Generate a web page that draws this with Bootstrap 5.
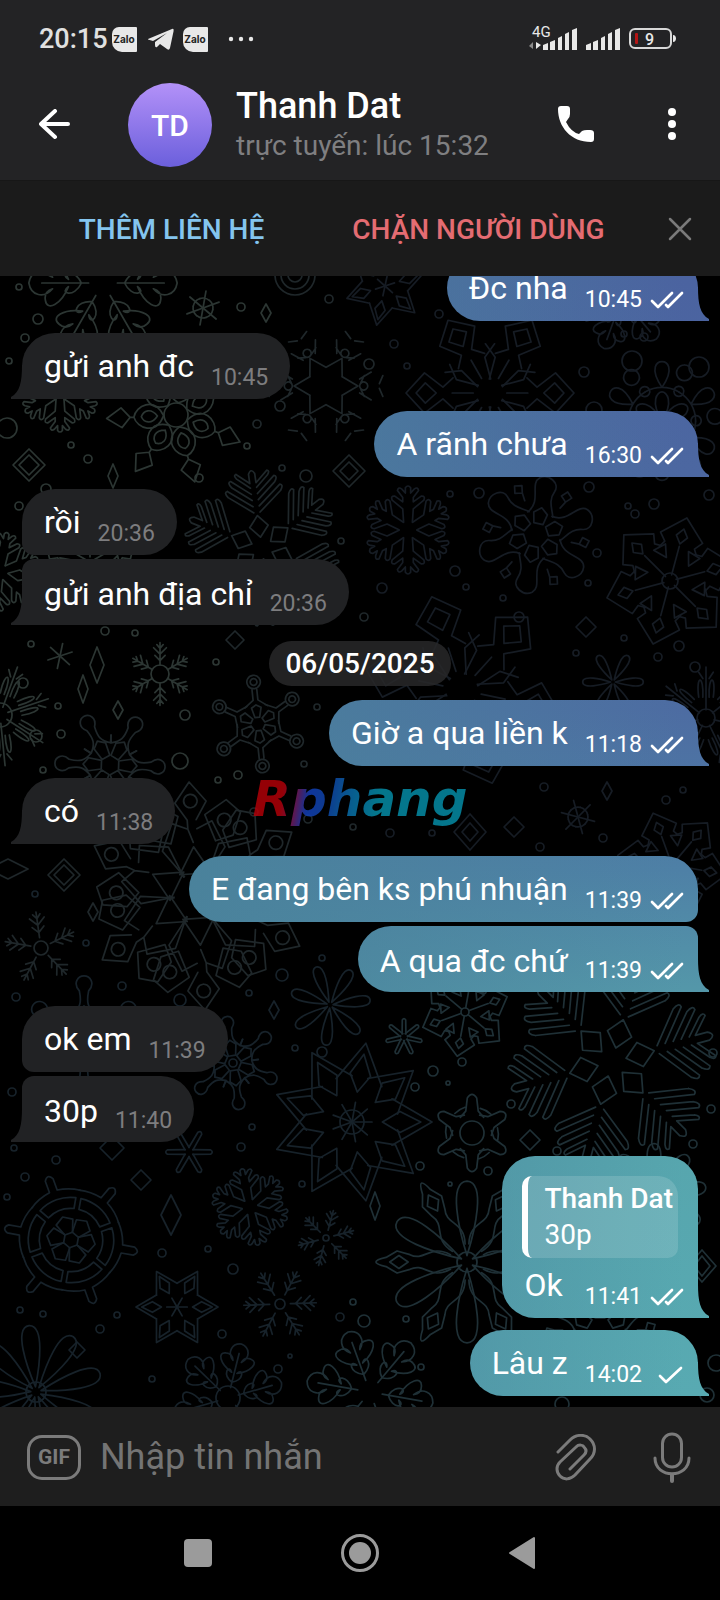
<!DOCTYPE html>
<html lang="vi">
<head>
<meta charset="utf-8">
<meta name="viewport" content="width=device-width, initial-scale=1">
<title>Thanh Dat</title>
<link href="https://cdn.jsdelivr.net/npm/bootstrap@5.3.0/dist/css/bootstrap.min.css" rel="stylesheet">
<style>
  body { background: #000; color: #fff; font-family: Roboto, "Noto Sans", sans-serif; }
  svg { display: block; }
  .screen { height: 100vh; }
  .plain-btn { background: none; border: 0; padding: 0; color: inherit; font-weight: inherit; }
  .medium { font-weight: 500; }

  .top-area { background: #232325; }
  .status-row { height: 80px; padding: 0 44px 2px 39px; color: #e8e8e8; font-size: 27px; }
  .clock { font-weight: 500; color: #e0e0e0; padding-top: 1px; }
  .zalo { width: 25px; height: 25px; background: #e8e8e8; border-radius: 7px 1px 1px 10px; color: #222; font: 700 10px/24px Inter, sans-serif; }
  .title-row { height: 100px; padding: 0 44px 10px 39px; }
  .avatar { width: 84px; height: 84px; margin-left: 56px; background: linear-gradient(#b391f8, #6b5fdc); font-size: 30px; font-weight: 500; }
  .chat-name { font-size: 36px; line-height: 38px; font-weight: 500; padding-top: 4px; }
  .chat-seen { font-size: 28px; line-height: 42px; color: #7f7f81; }
  .more-btn { margin-left: 73px; }

  .action-row { height: 96px; background: #1b1b1b; padding-left: 18px; font-size: 28px; font-weight: 500; border-top: 1px solid #171717; }
  .action-row .col { padding-top: 3px; }
  .add-link { color: #84c5ef; }
  .block-link { color: #e46c72; }
  .close-box { width: 88px; padding-left: 36px; color: #7a7a7a; }

  .chat { min-height: 0; background: #000; padding: 0 22px 11px; }
  .wall { position: absolute; inset: 0; width: 100%; height: 100%; fill: none; stroke-width: 1.7; stroke-linejoin: round; stroke-linecap: round; }
  .tint-a { stroke: #2c3633; } .tint-b { stroke: #1f272a; } .tint-c { stroke: #161c24; }
  .tint-d { stroke: #17222a; } .tint-e { stroke: #1f3036; }

  .bubble { position: relative; min-height: 66px; border-radius: 33px; font-size: 32px; line-height: 40px; padding: 13px 22px 7px; margin-top: 12px; gap: 17px; flex-shrink: 0; }
  .stamp { font-size: 23px; line-height: 28px; gap: 8px; height: 28px; margin-top: 18px; }
  .incoming { align-self: flex-start; background: #212224; }
  .incoming .stamp { color: #7d7d7f; }
  .outgoing, .outgoing.tailed::after {
    background:
      linear-gradient(90deg, rgba(74,130,155,1) 25%, rgba(74,130,155,0) 95%) fixed,
      linear-gradient(#4b63a0 276px, #4d6ca2 710px, #4e80a6 870px, #5497a9 990px, #57a6ae 1160px, #58aab2 1400px) fixed;
  }
  .outgoing { align-self: flex-end; padding-right: 14px; }
  .tailed::after { content: ""; position: absolute; bottom: 0; width: 33px; height: 34px; }
  .outgoing.tailed { border-bottom-right-radius: 0; }
  .outgoing.tailed::after { right: -11px; clip-path: path("M20 0H22C22 17 24 27 33 32V34H20Z"); }
  .incoming.tailed { border-bottom-left-radius: 0; }
  .incoming.tailed::after { left: -11px; background: #212224; clip-path: path("M13 0H11C11 17 9 27 0 32V34H13Z"); }
  .group-start.incoming { border-bottom-left-radius: 12px; }
  .group-end.incoming { border-top-left-radius: 12px; }
  .group-start.outgoing { border-bottom-right-radius: 12px; }
  .group-end.outgoing { border-top-right-radius: 12px; }
  .group-end { margin-top: 4px; padding-top: 15px; }
  .group-end .stamp { margin-top: 16px; }
  .turn { margin-top: 14px; }
  .day-pill { position: relative; height: 45px; margin: 16px 0 2px; padding: 0 16px; border-radius: 23px; background: rgba(40,40,41,.85); font-size: 28px; line-height: 45px; font-weight: 500; }

  .with-quote { padding: 20px 14px 7px 20px; }
  .quote { height: 82px; margin-right: 6px; padding: 5px 5px 0 16px; border-left: 6px solid #fff; border-radius: 10px 20px 10px 10px; background: rgba(255,255,255,.14); background-clip: padding-box; font-size: 28px; line-height: 36px; }
  .quote-body { padding: 7px 0 0 2px; }

  .stamp-mark { position: absolute; padding-bottom: 2px; font: italic 700 50px/60px "DejaVu Sans", sans-serif; opacity: .85;
    background: linear-gradient(100deg, #b00008 15%, #8a1040 20%, #123fb8 27%, #1046a8 36%, #0a6aa8 45%, #058ba5 58%); -webkit-background-clip: text; background-clip: text; color: transparent; pointer-events: none; }

  .compose { height: 99px; background: #1e1e1e; padding: 2px 29px 0 27px; color: #7b7b7b; }
  .gif-btn { width: 54px; height: 45px; border: 3px solid #7b7b7b; border-radius: 15px; font: 700 21px/39px Roboto, sans-serif; }
  .compose input { background: none; border: 0; outline: 0; min-width: 0; color: #ddd; font-size: 36px; padding: 0 0 2px; margin-left: 19px; }
  .compose input::placeholder { color: #747474; opacity: 1; }
  .mic-btn { margin-left: 56px; }
  .sys-nav { height: 94px; color: #9b9b9b; gap: 122px; }
</style>
</head>
<body>
<div class="screen d-flex flex-column position-relative overflow-hidden">

  <header class="top-area flex-shrink-0">
    <div class="status-row d-flex align-items-center">
      <span class="clock">20:15</span>
      <span class="zalo text-center ms-1">Zalo</span>
      <svg class="ms-2" width="30" height="26" viewBox="0 0 30 26" fill="#e8e8e8"><path d="M3 13 27 3Q29 2 28.600 5L25 22Q24 25 22 23L15 18 12 21Q10 22 10 19V16L22 7 8 15 3 13.500Z"/></svg>
      <span class="zalo text-center ms-2">Zalo</span>
      <svg class="ms-3" width="32" height="8" viewBox="0 0 32 8" fill="#e8e8e8"><circle cx="7" cy="4" r="2.200"/><circle cx="17" cy="4" r="2.200"/><circle cx="27" cy="4" r="2.200"/></svg>
      <svg class="ms-auto" width="148" height="30" viewBox="528 24 148 30" fill="#e8e8e8" role="img" aria-label="4G, pin 9%">
        <text x="532" y="37" font-size="15">4G</text>
        <path d="M536 42 L541 45 536 49Z"/><path fill="#8a8a8a" d="M533 42V49L529 46Z"/>
        <path d="M543 45 548 43V50H543ZM550 42 555 40V50H550ZM558 38 562 36V50H558ZM565 34 569 32V50H565ZM572 30 577 28V50H572Z"/>
        <path d="M586 45 591 43V50H586ZM593 42 598 40V50H593ZM601 38 605 36V50H601ZM608 34 612 32V50H608ZM615 30 620 28V50H615Z"/>
        <rect x="630" y="29" width="41" height="19" rx="5" fill="none" stroke="#d8d8d8" stroke-width="2"/>
        <path d="M673 35C677 35 677 42 673 42Z"/><rect x="635" y="33" width="3" height="11" rx="1" fill="#b41515"/>
        <text x="645" y="45" font-size="16" font-weight="500">9</text>
      </svg>
    </div>
    <div class="title-row d-flex align-items-center">
      <button class="plain-btn" type="button" aria-label="Quay lại"><svg width="33" height="32" viewBox="1 0 33 32" fill="none" stroke="#fff" stroke-width="4" stroke-linecap="round" stroke-linejoin="round"><path d="M30 15H3M17 2 3 15 17 28"/></svg></button>
      <div class="avatar rounded-circle d-flex align-items-center justify-content-center">TD</div>
      <div class="ms-4 flex-grow-1 text-nowrap">
        <div class="chat-name">Thanh Dat</div>
        <div class="chat-seen">trực tuyến: lúc 15:32</div>
      </div>
      <button class="plain-btn" type="button" aria-label="Gọi"><svg width="38" height="38" viewBox="0 1 38 38" fill="#fff"><path d="M4 1H10Q13 1 13 4V9Q13 12 11 14L9 17Q14 27 22 29L25 26Q27 25 30 25H33Q37 25 37 28V34Q37 37 34 37C14 37 1 22 1 4Q1 1 4 1Z"/></svg></button>
      <button class="plain-btn more-btn" type="button" aria-label="Thêm"><svg width="8" height="34" viewBox="0 0 8 34" fill="#fff"><circle cx="4" cy="4" r="4"/><circle cx="4" cy="16" r="4"/><circle cx="4" cy="28" r="4"/></svg></button>
    </div>
  </header>

  <div class="action-row d-flex align-items-stretch flex-shrink-0">
    <button class="plain-btn add-link col" type="button">THÊM LIÊN HỆ</button>
    <button class="plain-btn block-link col" type="button">CHẶN NGƯỜI DÙNG</button>
    <button class="plain-btn close-box" type="button" aria-label="Đóng"><svg width="24" height="24" viewBox="0 0 24 24" fill="none" stroke="currentColor" stroke-width="2.500" stroke-linecap="round"><path d="M2 2 22 22M22 2 2 22"/></svg></button>
  </div>

  <main class="chat position-relative overflow-hidden flex-grow-1 d-flex flex-column justify-content-end align-items-center">
    <svg class="wall" id="wall" viewBox="0 276 720 1131" preserveAspectRatio="xMidYMid slice" aria-hidden="true"></svg>

    <div class="bubble outgoing tailed d-flex"><span>Đc nha</span><span class="stamp d-flex align-items-center">10:45 <svg width="34" height="18" viewBox="0 0 34 18"><use href="#tick2"/></svg></span></div>
    <div class="bubble incoming tailed d-flex"><span>gửi anh đc</span><span class="stamp">10:45</span></div>
    <div class="bubble outgoing tailed d-flex"><span>A rãnh chưa</span><span class="stamp d-flex align-items-center">16:30 <svg width="34" height="18" viewBox="0 0 34 18"><use href="#tick2"/></svg></span></div>
    <div class="bubble incoming group-start d-flex"><span>rồi</span><span class="stamp">20:36</span></div>
    <div class="bubble incoming tailed group-end d-flex"><span>gửi anh địa chỉ</span><span class="stamp">20:36</span></div>
    <div class="day-pill flex-shrink-0">06/05/2025</div>
    <div class="bubble outgoing tailed d-flex"><span>Giờ a qua liền k</span><span class="stamp d-flex align-items-center">11:18 <svg width="34" height="18" viewBox="0 0 34 18"><use href="#tick2"/></svg></span></div>
    <div class="bubble incoming tailed d-flex"><span>có</span><span class="stamp">11:38</span></div>
    <div class="bubble outgoing group-start d-flex"><span>E đang bên ks phú nhuận</span><span class="stamp d-flex align-items-center">11:39 <svg width="34" height="18" viewBox="0 0 34 18"><use href="#tick2"/></svg></span></div>
    <div class="bubble outgoing tailed group-end d-flex"><span>A qua đc chứ</span><span class="stamp d-flex align-items-center">11:39 <svg width="34" height="18" viewBox="0 0 34 18"><use href="#tick2"/></svg></span></div>
    <div class="bubble incoming group-start turn d-flex"><span>ok em</span><span class="stamp">11:39</span></div>
    <div class="bubble incoming tailed group-end d-flex"><span>30p</span><span class="stamp">11:40</span></div>
    <div class="bubble outgoing tailed turn with-quote d-block">
      <div class="quote text-nowrap"><div class="medium">Thanh Dat</div><div>30p</div></div>
      <div class="quote-body d-flex justify-content-between"><span>Ok</span><span class="stamp d-flex align-items-center">11:41 <svg width="34" height="18" viewBox="0 0 34 18"><use href="#tick2"/></svg></span></div>
    </div>
    <div class="bubble outgoing tailed d-flex"><span>Lâu z</span><span class="stamp d-flex align-items-center">14:02 <svg width="34" height="18" viewBox="0 0 34 18"><path d="M10 10 16 16 31 2" fill="none" stroke="#fff" stroke-width="2.700" stroke-linecap="round" stroke-linejoin="round"/></svg></span></div>
  </main>

  <form class="compose d-flex align-items-center flex-shrink-0">
    <button class="plain-btn gif-btn" type="button">GIF</button>
    <input class="flex-grow-1" type="text" placeholder="Nhập tin nhắn" aria-label="Nhập tin nhắn">
    <button class="plain-btn" type="button" aria-label="Đính kèm"><svg width="42" height="48" viewBox="0 0 42 48" fill="none" stroke="currentColor" stroke-width="3" stroke-linecap="round" stroke-linejoin="round"><path d="M3 18 15 6C21 0 30 0 35 5C41 11 41 19 35 25L20 41C15 46 9 46 5 42C1 38 1 32 5 28L21 13C24 10 28 11 29 13C32 16 31 19 29 21L15 35"/></svg></button>
    <button class="plain-btn mic-btn" type="button" aria-label="Ghi âm"><svg width="38" height="52" viewBox="0 0 38 52" fill="none" stroke="currentColor" stroke-width="3" stroke-linecap="round"><rect x="9.500" y="2" width="19" height="33" rx="9.500"/><path d="M2 26C2 47 36 47 36 26"/><path stroke-width="4" d="M19 43V49"/></svg></button>
  </form>

  <nav class="sys-nav d-flex align-items-center justify-content-center flex-shrink-0">
    <button class="plain-btn" type="button" aria-label="Gần đây"><svg width="40" height="40" viewBox="0 0 40 40" fill="currentColor"><rect x="6" y="6" width="28" height="28" rx="4"/></svg></button>
    <button class="plain-btn" type="button" aria-label="Trang chủ"><svg width="40" height="40" viewBox="0 0 40 40" fill="currentColor"><circle cx="20" cy="20" r="11"/><circle cx="20" cy="20" r="17.500" fill="none" stroke="currentColor" stroke-width="3"/></svg></button>
    <button class="plain-btn" type="button" aria-label="Trở về"><svg width="40" height="40" viewBox="0 0 40 40" fill="currentColor" stroke="currentColor" stroke-width="2" stroke-linejoin="round"><path d="M8 20 32 5V35Z"/></svg></button>
  </nav>

  <div class="stamp-mark top-50 start-50 translate-middle">Rphang</div>
</div>

<svg width="0" height="0" class="position-absolute" aria-hidden="true"><defs><path id="tick2" d="M2 10 8 16 22 2M16 14 18 16 32 2" fill="none" stroke="#fff" stroke-width="2.700" stroke-linecap="round" stroke-linejoin="round"/></defs></svg>

<script src="https://cdn.jsdelivr.net/npm/bootstrap@5.3.0/dist/js/bootstrap.bundle.min.js"></script>
<script>
// Snowflake wallpaper: each arm is drawn pointing up on a radius of 100 and repeated around the centre.
const arms = {
  leaf: 'M0-20V-85M0-30C-22-40-14-62-5-48C-30-58-40-78-24-80C-14-82-10-76-8-70C-22-82-18-100 0-103C18-100 22-82 8-70C10-76 14-82 24-80C40-78 30-58 5-48C14-62 22-40 0-30',
  wheel: 'M0 0V-95M-27-48A55 55 0 0 1 27-48',
  chevron: 'M-16-28L0-55L16-28M-24-78L-12-58M24-78L12-58M-18-66L-6-60M18-66L6-60M-18-98L-4-92M18-98L4-92M0-72a7 7 0 1 0 .1 0',
  loop: 'M0-20C-32-34-18-64 0-68C18-64 32-34 0-20M0-30C-14-40-10-52 0-56C10-52 14-40 0-30M0-68V-74M0-74L-16-88L0-112L16-88Z',
  star: 'M-29-50L0-100L29-50M0-86L-13-60L0-38L13-60ZM0 0V-25',
  kite: 'M-9-14L-16-40L-34-48M9-14L16-40L34-48M0-20V-45M-18-44L-7-56L-24-78L0-100L24-78L7-56L18-44M0-88L-12-77L0-64L12-77Z',
  petals: 'M-30-52A60 60 0 0 1 30-52M0-60C-24-96-8-106 0-106C8-106 24-96 0-60M0 0C-22-36-8-52 0-52C8-52 22-36 0 0M30-62a9 9 0 1 0 .1 0M40-100a14 14 0 1 0 .1 0',
  branch: 'M-10-18L-12-48L-36-68Q-40-78-30-77L-12-64V-74L-24-90Q-22-99-14-93L-6-84V-96Q0-104 6-96V-84L14-93Q22-99 24-90L12-74V-64L30-77Q40-78 36-68L12-48L10-18',
  blob: 'M-22-36C-2-60-30-84-14-98C0-108 22-96 16-80C8-62 18-50 22-36M0-48L-12-38L-8-20H8L12-38ZM38-66L31-54M38-84l-9 9 9 9 9-9Z',
  crystal: 'M-30-48L-24-58L-34-70L0-102L34-70L24-58L30-48M0-84L-9-72L0-60L9-72ZM0-10V-56M22-30L16-52L36-46Z',
  fern: 'M0-14L-12-28L0-42L12-28ZM-4-96V-84L-20-98M-4-78L-20-92M-4-70L-28-90M-4-62L-28-82M-4-54L-34-78M-4-46L-34-70M4-96V-84L20-98M4-78L20-92M4-70L28-90M4-62L28-82M4-54L34-78M4-46L34-70M-4-96Q0-104 4-96M-20-98Q-24-97-20-92M20-98Q24-97 20-92M-28-90Q-33-89-28-82M28-90Q33-89 28-82M-34-78Q-39-77-34-70M34-78Q39-77 34-70',
  twig: 'M0-28V-98M0-42L-16-58M0-42L16-58M0-62L-20-82M0-62L20-82M0-80L-10-92M0-80L10-92',
  stick: 'M0 0V-98',
  knob: 'M-20-36C-6-48-4-56-8-76C-20-90-10-102 0-102C10-102 20-90 8-76C4-56 6-48 20-36M0-50L-12-40L-8-16H8L12-40ZM-28-48L-20-36M28-48L20-36',
  ring: 'M-24-36L-5-50V-72M24-36L5-50V-72M0-74a14 14 0 1 0-.1 0M0-81a7 7 0 1 0-.1 0M0-40L-10-34L-5-14H5L10-34Z',
  petal: 'M0-8C-10-40-24-100 0-101C24-100 10-40 0-8',
  duo: 'M-10-18L-28-42L-18-66L-4-60L0-48M10-18L28-42L18-66L4-60M-4-60V-68L-14-84L0-102L14-84L4-68M0-79a6 6 0 1 0-.1 0M-32-84L-44-72L-36-52L-20-48L-12-72ZM32-84L44-72L36-52L20-48L12-72ZM-29-60a6 6 0 1 0-.1 0M29-60a6 6 0 1 0-.1 0M0-44L-14-20H14Z',
  fan: 'M0-16V-98M-14-40C-20-84-4-84-6-40M6-40C4-84 20-84 14-40M-14-88L-6-76M14-88L6-76',
  gear: 'M-30-40L-16-56L-12-90Q0-108 12-90L16-56L30-40M-18-66A64 64 0 0 0-44-50',
  outline: 'M-10-16L-9-90Q0-104 9-90L10-16',
  longarm: 'M-8-18C-20-40 0-46-8-62L-12-76L-5-88Q0-110 5-88L12-76L8-62C0-46 20-40 8-18M0-84L-7-74L0-64L7-74Z',
  ship: 'M-38-64A75 75 0 0 1-6-76V-94Q0-104 6-94V-76A75 75 0 0 1 38-64M-28-56A60 60 0 0 1 28-56L20-42A46 46 0 0 0-20-42ZM0-36L-13-28L-6-10H6L13-28Z'
};
// kind, centre x, centre y, radius, arm count, rotation, tint, centre circle radius
const flakes = [
  ['leaf',103,283,72,6,30,'a',0],['wheel',203,308,18,6,10,'a',0],['chevron',326,386,58,6,30,'b',0],
  ['loop',176,415,62,7,10,'a',12],['branch',60,392,40,6,0,'a',0],['star',385,286,40,6,12,'c',0],
  ['kite',490,393,84,6,-30,'c',0],['petals',662,421,56,6,0,'c',0],['leaf',622,298,52,6,20,'c',0],
  ['branch',408,530,44,6,0,'c',0],['blob',536,535,58,6,12,'c',0],['crystal',670,581,64,6,15,'c',8],
  ['fern',262,548,78,6,-8,'b',0],['kite',462,690,98,6,-18,'c',0],['twig',160,674,32,6,0,'a',9],
  ['stick',60,656,13,6,12,'a',0],['fan',0,715,52,7,20,'a',12],['knob',110,765,54,6,-28,'b',0],
  ['ring',258,724,48,6,-6,'b',0],['petal',613,682,30,6,30,'c',0],['fan',706,718,52,7,0,'c',9],
  ['duo',197,896,112,6,-4,'b',0],['twig',41,948,37,5,-8,'b',7],['wheel',578,817,18,6,-15,'c',0],
  ['crystal',672,865,54,6,40,'c',0],['petal',330,1005,40,7,-20,'d',0],
  ['knob',233,1063,46,6,-8,'d',4],['star',352,1122,80,9,10,'d',12],['gear',472,1133,39,6,0,'e',12],
  ['crystal',465,1012,44,6,10,'e',4],['fern',612,1062,104,6,15,'e',0],['outline',404,1037,19,7,0,'e',0],
  ['longarm',467,1262,92,6,30,'e',10],['petal',467,1262,80,6,0,'e',0],['outline',189,1152,24,6,30,'d',0],['branch',250,1207,39,6,-12,'d',0],
  ['twig',326,1238,29,6,15,'d',3],['ship',71,1240,68,6,-20,'d',0],['star',177,1307,41,6,30,'d',0],
  ['twig',280,1304,37,6,28,'d',5],['petal',36,1392,66,9,-6,'d',10],['leaf',228,1398,54,6,14,'d',12],
  ['leaf',370,1392,62,6,-20,'e',0],['petal',654,1196,52,9,0,'e',14],['blob',600,1330,60,6,0,'e',0],
  ['branch',0,572,40,6,10,'a',0],['crystal',90,562,52,6,0,'a',0],['knob',84,1035,58,6,0,'d',0]
];
const dots = [
  [19,287,3],[38,319,5],[25,338,4],[9,361,3],[241,307,4],[329,299,4],[280,406,5],[257,424,4],[71,445,3],[88,459,4],[7,428,10],
  [199,478,4],[247,446,3],[282,468,3],[306,476,6],[19,506,4],[46,489,5],[341,541,3],[439,314,4],[394,344,4],[369,364,5],[407,366,3],
  [584,372,5],[624,334,3],[644,337,4],[632,361,10],[699,367,10],[594,410,8],[709,495,5],[654,504,5],[628,506,3],[635,514,4],[597,553,4],
  [589,487,5],[479,493,5],[450,494,3],[455,571,5],[382,588,5],[466,587,3],[519,617,5],[503,598,3],[588,583,3],[364,617,4],[624,638,3],
  [105,631,4],[135,633,3],[31,644,3],[216,662,3],[185,715,5],[180,761,8],[58,706,3],[61,734,4],[36,736,6],[23,683,5],[43,770,3],
  [317,707,3],[304,764,3],[238,775,4],[218,780,3],[254,812,4],[308,819,4],[353,827,3],[390,833,4],[432,833,3],[544,787,4],[683,790,3],
  [666,800,4],[603,838,4],[540,847,4],[658,657,4],[679,646,5],[695,667,5],[576,653,3],[35,894,3],[86,943,3],[122,986,4],[16,997,4],
  [180,1000,6],[249,993,3],[282,975,6],[322,958,3],[295,1048,3],[322,1052,5],[12,1092,4],[14,1148,3],[56,1160,4],[25,1177,4],[7,1197,3],
  [241,1147,4],[252,1127,3],[302,1184,3],[162,1253,4],[208,1249,3],[233,1269,5],[20,1310,3],[43,1314,3],[100,1329,4],[117,1315,3],
  [222,1334,4],[340,1317,4],[353,1302,3],[278,1369,4],[290,1356,2],[152,1379,3],[433,1071,5],[462,1062,4],[415,1087,4],[511,1104,4],
  [448,1083,2],[420,1166,4],[488,1171,4],[557,1151,4],[693,1144,4],[711,1109,4],[713,1053,4],[450,1184,2],[406,1319,3],[364,1321,6],
  [421,1367,3],[716,1363,8],[707,1395,7],[562,1404,7]
];
// centre x, centre y, half width, half height, tint
const gems = [
  [266,313,5,9,'a'],[113,476,5,12,'a'],[97,665,7,18,'a'],[83,689,5,14,'a'],[118,710,5,9,'a'],[93,912,5,9,'b'],[607,791,5,9,'c'],
  [274,1010,5,9,'d'],[171,1215,10,20,'d'],[375,1206,5,14,'e'],[29,465,16,16,'a'],[29,465,10,10,'a'],[349,471,16,16,'b'],[349,471,9,9,'b'],
  [64,875,16,16,'b'],[64,875,10,10,'b'],[8,869,20,10,'b'],[586,627,10,10,'c'],[514,827,10,10,'c'],[530,1140,10,10,'e'],[141,1180,10,10,'d'],
  [77,1350,8,8,'d'],[112,1148,12,12,'d'],[235,640,9,9,'b'],[702,1266,14,16,'e'],[702,1266,8,10,'e'],[470,832,16,18,'c'],[470,832,8,9,'c']
];
const tintAt = (x, y) => y < 840 ? (x < 250 ? 'a' : x < 380 ? 'b' : 'c') : (x < 350 ? 'd' : y > 1000 ? 'e' : 'c');
let out = '';
for (const [kind, x, y, r, n, rot, tint, hub] of flakes) {
  for (let i = 0; i < n; i++)
    out += `<path class="tint-${tint}" vector-effect="non-scaling-stroke" transform="translate(${x} ${y}) rotate(${rot + i * 360 / n}) scale(${r / 100})" d="${arms[kind]}"/>`;
  if (hub) out += `<circle class="tint-${tint}" cx="${x}" cy="${y}" r="${hub}"/>`;
}
for (const [x, y, r] of dots) out += `<circle class="tint-${tintAt(x, y)}" cx="${x}" cy="${y}" r="${r}"/>`;
for (const [x, y, w, h, tint] of gems) out += `<path class="tint-${tint}" d="M${x} ${y - h}L${x + w} ${y}L${x} ${y + h}L${x - w} ${y}Z"/>`;
for (const r of [20, 14, 7]) out += `<circle class="tint-b" cx="295" cy="275" r="${r}"/>`;
document.getElementById('wall').innerHTML = out;
</script>
</body>
</html>
